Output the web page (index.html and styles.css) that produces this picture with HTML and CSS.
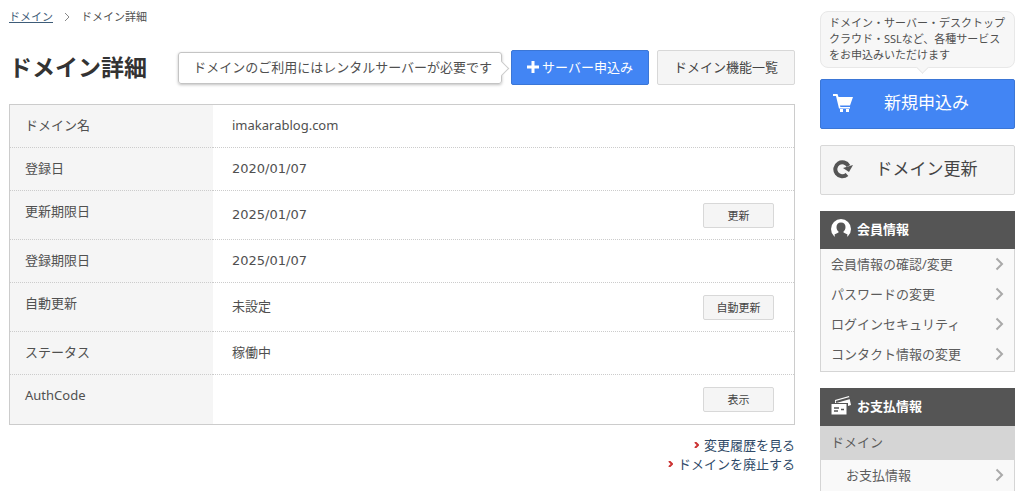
FILE: index.html
```html
<!DOCTYPE html>
<html lang="ja">
<head>
<meta charset="utf-8">
<meta name="viewport" content="width=device-width, initial-scale=1">
<title>ドメイン詳細</title>
<link rel="stylesheet" href="styles.css">
</head>
<body>
<div class="page">
  <main class="main">
    <nav class="breadcrumb" aria-label="パンくず">
      <a href="#">ドメイン</a>
      <svg class="breadcrumb-sep" viewBox="0 0 6 10" aria-hidden="true"><path d="M1 1l4 4-4 4"/></svg>
      <span>ドメイン詳細</span>
    </nav>

    <header class="heading">
      <h1>ドメイン詳細</h1>
      <p class="notice">ドメインのご利用にはレンタルサーバーが必要です</p>
      <button class="button button-primary" type="button">
        <svg class="plus" viewBox="0 0 12 12" aria-hidden="true"><path d="M6 0v12M0 6h12"/></svg>サーバー申込み</button>
      <button class="button" type="button">ドメイン機能一覧</button>
    </header>

    <table class="details">
      <tr><th scope="row">ドメイン名</th><td>imakarablog.com</td><td class="action"></td></tr>
      <tr><th scope="row">登録日</th><td class="date">2020/01/07</td><td class="action"></td></tr>
      <tr><th scope="row">更新期限日</th><td class="date">2025/01/07</td><td class="action"><button class="button button-small" type="button">更新</button></td></tr>
      <tr><th scope="row">登録期限日</th><td class="date">2025/01/07</td><td class="action"></td></tr>
      <tr><th scope="row">自動更新</th><td>未設定</td><td class="action"><button class="button button-small" type="button">自動更新</button></td></tr>
      <tr><th scope="row">ステータス</th><td>稼働中</td><td class="action"></td></tr>
      <tr><th scope="row">AuthCode</th><td></td><td class="action"><button class="button button-small" type="button">表示</button></td></tr>
    </table>

    <ul class="links">
      <li><a href="#"><svg viewBox="0 0 5 6" aria-hidden="true"><path d="M1 0l3 3-3 3"/></svg>変更履歴を見る</a></li>
      <li><a href="#"><svg viewBox="0 0 5 6" aria-hidden="true"><path d="M1 0l3 3-3 3"/></svg>ドメインを廃止する</a></li>
    </ul>
  </main>

  <aside class="sidebar">
    <p class="tip">ドメイン・サーバー・デスクトップ<br>クラウド・SSLなど、各種サービス<br>をお申込みいただけます</p>
    <button class="button button-large button-primary" type="button">
      <svg class="icon" viewBox="0 0 20 20" aria-hidden="true"><path fill="#fff" d="M0 1h4.500l1 3H20l-3 8.500H7l.4 1.500H17v1.500H6L3 3H0zM7 16h3v3H7zM13 16h3v3h-3z"/></svg>
      <span>新規申込み</span>
    </button>
    <button class="button button-large" type="button">
      <svg class="icon" viewBox="0 0 20 20" aria-hidden="true"><path fill="none" stroke="#555" stroke-width="4" d="M14 15.500A7 7 0 1 1 15.500 7"/><path fill="#555" d="M10 9l10-3-4 7z"/></svg>
      <span>ドメイン更新</span>
    </button>

    <section class="panel">
      <h2>
        <svg class="icon" viewBox="0 0 20 20" aria-hidden="true"><circle cx="10" cy="10" r="10" fill="#fff"/><path fill="#555" d="M10 3.500c3 0 4.500 2 4.500 4.500 0 2-.8 3.500-2 4.500v1l4 2-1 4.500h-11l-1-4.500 4-2v-1c-1.200-1-2-2.500-2-4.500 0-2.500 1.500-4.500 4.500-4.500z"/></svg>
        会員情報
      </h2>
      <ul class="menu">
        <li><a href="#">会員情報の確認/変更<svg viewBox="0 0 9 14" aria-hidden="true"><path d="M1.500 1.500L7 7l-5.500 5.500"/></svg></a></li>
        <li><a href="#">パスワードの変更<svg viewBox="0 0 9 14" aria-hidden="true"><path d="M1.500 1.500L7 7l-5.500 5.500"/></svg></a></li>
        <li><a href="#">ログインセキュリティ<svg viewBox="0 0 9 14" aria-hidden="true"><path d="M1.500 1.500L7 7l-5.500 5.500"/></svg></a></li>
        <li><a href="#">コンタクト情報の変更<svg viewBox="0 0 9 14" aria-hidden="true"><path d="M1.500 1.500L7 7l-5.500 5.500"/></svg></a></li>
      </ul>
    </section>

    <section class="panel">
      <h2>
        <svg class="icon" viewBox="0 0 20 20" aria-hidden="true"><path fill="#fff" d="M4 4L18 0l2 9-3 1V7H4z"/><path stroke="#555" stroke-width="2" d="M5 6l14-4"/><path fill="#fff" stroke="#555" d="M0 7.500h16v11.500H0z"/><path stroke="#555" stroke-width="1.500" d="M3 12h5M3 15h4M10 13.500h3"/></svg>
        お支払情報
      </h2>
      <h3>ドメイン</h3>
      <ul class="menu menu-nested">
        <li><a href="#">お支払情報<svg viewBox="0 0 9 14" aria-hidden="true"><path d="M1.500 1.500L7 7l-5.500 5.500"/></svg></a></li>
      </ul>
    </section>
  </aside>
</div>
</body>
</html>
```
FILE: styles.css
```css
* {
  box-sizing: border-box;
}

html {
  overflow: hidden;
}

body {
  margin: 0;
  background: #fff;
  color: #505050;
  font: 13px/18px "Noto Sans", "Noto Sans CJK JP", sans-serif;
}

h1, h2, h3, p, ul {
  margin: 0;
  padding: 0;
}

ul {
  list-style: none;
}

a {
  color: inherit;
  text-decoration: none;
}

.page {
  display: grid;
  grid-template-columns: 1fr 195px;
  gap: 25px;
  padding: 0 9px;
}

.main {
  padding-top: 8px;
}

.breadcrumb {
  display: flex;
  align-items: center;
  gap: 11px;
  font-size: 11px;
}

.breadcrumb a {
  color: #3e5c78;
  text-decoration: underline;
}

.breadcrumb-sep {
  width: 6px;
  height: 10px;
  fill: none;
  stroke: #888;
}

.heading {
  display: flex;
  align-items: center;
  gap: 8px;
  margin: 24px 0 19px;
}

.heading h1 {
  margin-right: auto;
  color: #333;
  font-size: 23px;
  line-height: 35px;
  white-space: nowrap;
}

.notice {
  position: relative;
  margin-right: 1px;
  padding: 5px 9px 7px 14px;
  border: 1px solid #c4c4c4;
  border-radius: 3px;
  box-shadow: 0 1px 3px rgba(0, 0, 0, .25);
  white-space: nowrap;
}

.notice::after {
  content: "";
  position: absolute;
  top: 10px;
  right: -6px;
  width: 10px;
  height: 10px;
  border: 1px solid #ccc;
  border-width: 1px 1px 0 0;
  background: #fff;
  transform: rotate(45deg);
}

.button {
  display: flex;
  align-items: center;
  justify-content: center;
  min-width: 138px;
  height: 35px;
  padding: 0 8px 2px;
  border: 1px solid #d8d8d8;
  border-radius: 2px;
  background: #f5f5f5;
  color: #444;
  font: inherit;
  white-space: nowrap;
  cursor: pointer;
}

.button-primary {
  border-color: #3b76d6;
  background: #4285f4;
  color: #fff;
}

.plus {
  width: 12px;
  height: 12px;
  margin-right: 3px;
  stroke: #fff;
  stroke-width: 3;
}

.button-small {
  min-width: 71px;
  height: 25px;
  margin-left: auto;
  padding-bottom: 0;
  font-size: 11px;
}

.details {
  width: 100%;
  border: 1px solid #ccc;
  border-spacing: 0;
}

.details th,
.details td {
  padding: 11px 0 13px 19px;
  border-bottom: 1px dotted #ccc;
  text-align: left;
}

.details th {
  width: 203px;
  padding-left: 15px;
  background: #f5f5f5;
  font-weight: normal;
  vertical-align: top;
}

.details tr:last-child > * {
  border-bottom: 0;
}

.details tr:last-child > .action {
  padding-bottom: 12px;
}

.details .date {
  padding: 12px 0 12px 19px;
  font-family: "DejaVu Sans", sans-serif;
}

.details .action {
  padding: 12px 20px 11px 0;
}

.links {
  margin-top: 11px;
  color: #2f4a68;
  line-height: 19px;
  text-align: right;
}

.links svg {
  width: 5px;
  height: 6px;
  margin: 0 5px 2px 0;
  fill: none;
  stroke: #c33;
  stroke-width: 2;
}

.sidebar {
  padding-top: 11px;
}

.tip {
  position: relative;
  margin-bottom: 11px;
  padding: 3px 8px 4px;
  border: 1px solid #e8e8e8;
  border-radius: 8px;
  background: #f7f7f7;
  font-size: 11px;
  line-height: 16px;
  white-space: nowrap;
}

.tip::after {
  content: "";
  position: absolute;
  bottom: -5px;
  left: 50%;
  width: 8px;
  height: 8px;
  border: 1px solid #e8e8e8;
  border-width: 0 1px 1px 0;
  background: #f7f7f7;
  transform: rotate(45deg);
}

.button-large {
  width: 100%;
  height: 50px;
  margin-bottom: 16px;
  padding: 0 14px 2px 12px;
  font-size: 17px;
}

.button-large span {
  flex: 1;
}

.icon {
  flex: none;
  width: 20px;
  height: 20px;
}

.panel {
  margin-bottom: 16px;
}

.panel h2 {
  display: flex;
  align-items: center;
  gap: 6px;
  height: 38px;
  padding: 0 0 2px 11px;
  background: #555;
  color: #fff;
  font-size: 13px;
}

.panel h3 {
  padding: 7px 11px 9px;
  background: #d5d5d5;
  color: #5c5c5c;
  font-size: 13px;
  font-weight: normal;
}

.menu {
  padding-bottom: 2px;
  border: 1px solid #d5d5d5;
  border-top: 0;
  background: #f9f9f9;
  color: #5c5c5c;
}

.menu a {
  display: flex;
  align-items: center;
  justify-content: space-between;
  height: 30px;
  padding: 0 10px;
}

.menu svg {
  width: 9px;
  height: 14px;
  fill: none;
  stroke: #aaa;
  stroke-width: 2;
}

.menu-nested a {
  padding-left: 25px;
}
```
